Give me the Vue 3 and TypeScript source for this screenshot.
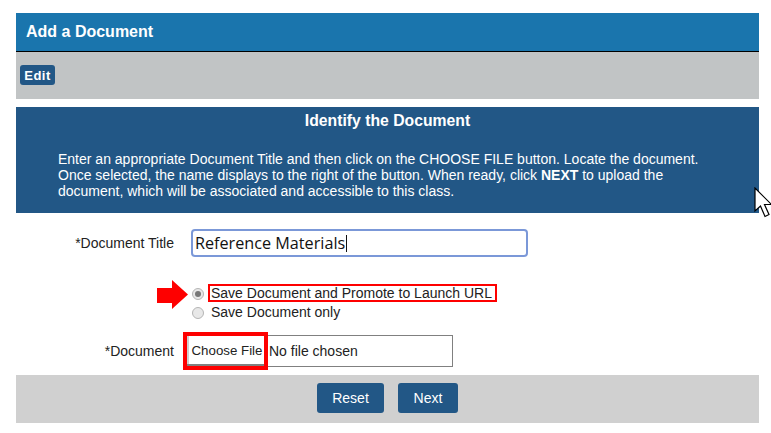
<script setup lang="ts">
const title = 'Add a Document'
const lines = [
  'Enter an appropriate Document Title and then click on the CHOOSE FILE button. Locate the document.',
  'Once selected, the name displays to the right of the button. When ready, click',
  'document, which will be associated and accessible to this class.',
]
</script>

<template>
  <div class="page">
    <header class="head">{{ title }}</header>
    <div class="toolbar"><button class="edit">Edit</button></div>
    <section class="panel">
      <h2>Identify the Document</h2>
      <p>
        {{ lines[0] }}<br />
        {{ lines[1] }} <b>NEXT</b> to upload the<br />
        {{ lines[2] }}
      </p>
    </section>
    <form class="form" @submit.prevent>
      <div class="row title-row">
        <label class="lbl">*Document Title</label>
        <div class="title-input">Reference Materials<span class="caret"></span></div>
      </div>
      <div class="radios">
        <svg class="arrow" width="31" height="29" viewBox="0 0 31 29">
          <path d="M0 8H15V0L31 14.5L15 29V23H0Z" fill="#fe0000" />
        </svg>
        <div class="radio-line first">
          <span class="radio checked"></span>
          <span class="opt boxed">Save Document and Promote to Launch URL</span>
        </div>
        <div class="radio-line second">
          <span class="radio"></span>
          <span class="opt">Save Document only</span>
        </div>
      </div>
      <div class="row file-row">
        <label class="lbl">*Document</label>
        <div class="file">
          <button class="choose">Choose File</button>
          <span class="nofile">No file chosen</span>
        </div>
      </div>
    </form>
    <footer class="foot">
      <button class="btn reset">Reset</button>
      <button class="btn next">Next</button>
    </footer>
    <svg class="cursor" width="18" height="31" viewBox="0 0 18 31">
      <path d="M1 1V24L6.5 19L11 29.5L15 27.5L10.5 17.5H17.5Z" fill="#fff" stroke="#000" stroke-width="1.2" stroke-linejoin="miter" />
    </svg>
  </div>
</template>

<style>
html, body { margin: 0; background: #fff; }
</style>

<style scoped>
.page {
  position: relative;
  width: 771px;
  height: 433px;
  box-sizing: border-box;
  padding: 13px 12px 0 16px;
  overflow: hidden;
  font-family: "Liberation Sans", Arial, sans-serif;
  color: #222;
}
.head {
  height: 38px;
  line-height: 37px;
  padding-left: 10px;
  background: #1a75ad;
  color: #fff;
  font-size: 16px;
  font-weight: bold;
  border-bottom: 1px solid #000;
}
.toolbar {
  height: 47px;
  background: #c1c4c5;
  padding: 13px 0 0 4px;
  box-sizing: border-box;
}
.edit {
  display: block;
  width: 35px;
  height: 20px;
  padding: 0;
  border: 0;
  border-radius: 3px;
  background: #225786;
  color: #fff;
  font: bold 13px "Liberation Sans", Arial, sans-serif;
  letter-spacing: 0.5px;
}
.panel {
  margin-top: 8px;
  height: 106px;
  box-sizing: border-box;
  background: #225786;
  color: #fff;
  padding-top: 5px;
}
.panel h2 {
  margin: 0;
  text-align: center;
  font-size: 15.75px;
  line-height: 17px;
  font-weight: bold;
}
.panel p {
  margin: 22px 0 0;
  padding-left: 42px;
  font-size: 14px;
  line-height: 16px;
}
.form { height: 162px; }
.row { display: flex; align-items: center; }
.lbl {
  width: 158px;
  text-align: right;
  font-size: 14px;
  color: #222;
}
.title-row { padding-top: 16px; height: 28px; }
.title-input {
  margin-left: 17px;
  width: 337px;
  height: 28px;
  box-sizing: border-box;
  border: 2px solid #7b98d8;
  border-radius: 4px;
  padding-left: 2px;
  line-height: 25px;
  font-family: "Open Sans", sans-serif;
  font-size: 16.2px;
  color: #111;
}
.caret {
  display: inline-block;
  width: 1px;
  height: 17px;
  background: #111;
  margin-left: 1px;
  vertical-align: -3px;
}
.radios {
  position: relative;
  margin: 27px 0 0 176px;
  height: 37px;
  font-size: 14px;
}
.arrow { position: absolute; left: -35px; top: -4px; }
.radio-line {
  display: flex;
  align-items: center;
}
.radio-line.first { height: 18px; }
.radio-line.second { height: 19px; }
.radio {
  width: 12px;
  height: 12px;
  box-sizing: border-box;
  border: 1px solid #b5b5b5;
  border-radius: 50%;
  background: #e8e8e8;
  position: relative;
  margin-right: 7px;
}
.first .radio { margin-top: 2px; }
.second .radio { margin-top: 3px; }
.radio.checked::after {
  content: "";
  position: absolute;
  left: 2px;
  top: 2px;
  width: 6px;
  height: 6px;
  border-radius: 50%;
  background: #777;
}
.opt { color: #222; line-height: 16px; white-space: nowrap; }
.boxed {
  border: 2px solid #fe0000;
  line-height: 14px;
  height: 14px;
  margin-left: -3px;
  padding: 0 3px 0 1px;
}
.file-row { margin-top: 14px; height: 32px; }
.file {
  position: relative;
  margin-left: 12px;
  width: 267px;
  height: 32px;
  box-sizing: border-box;
  border: 1px solid #808080;
  display: flex;
  align-items: center;
  font-size: 14px;
}
.choose {
  position: relative;
  left: -4px;
  flex: none;
  width: 85px;
  height: 38px;
  padding: 0 0 1px 3px;
  box-sizing: border-box;
  border: 4px solid #fe0000;
  background: #fff;
  font: 13.3px "Liberation Sans", Arial, sans-serif;
  color: #222;
  white-space: nowrap;
  box-shadow: inset 0 -2px 0 #808080, inset 2px 0 0 #d0d0d0;
}
.nofile { margin-left: -3px; color: #222; }
.foot {
  height: 48px;
  box-sizing: border-box;
  padding-bottom: 2px;
  background: #d0d0d0;
  display: flex;
  justify-content: center;
  align-items: center;
  gap: 14px;
}
.btn {
  height: 30px;
  padding: 0;
  border: 0;
  border-radius: 3px;
  background: #225786;
  color: #fff;
  font: 14px "Liberation Sans", Arial, sans-serif;
}
.reset { width: 67px; }
.next { width: 60px; }
.cursor { position: absolute; left: 754px; top: 187px; }
</style>
